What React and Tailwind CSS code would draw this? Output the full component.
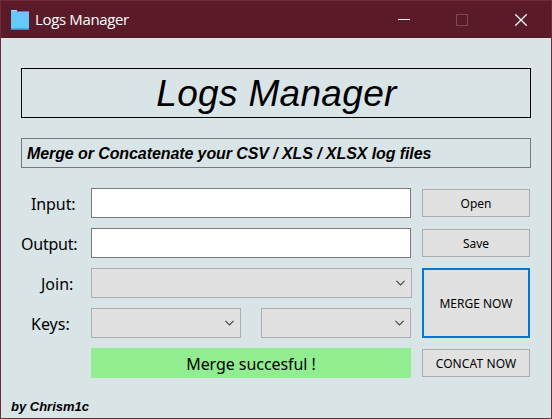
function Chevron() {
  return (
    <svg className="h-[6px] w-[9px] shrink-0" viewBox="0 0 9 6" fill="none">
      <path d="M0.4 0.8 L4.5 4.9 L8.6 0.8" stroke="#444" strokeWidth="1.1" />
    </svg>
  );
}

function Select({ className }) {
  return (
    <div className={`flex h-[30px] items-center justify-end border border-[#adadad] bg-[#e1e1e1] pr-[6px] ${className}`}>
      <Chevron />
    </div>
  );
}

function Label({ children, className }) {
  return <div className={`h-[30px] w-[70px] whitespace-nowrap text-base leading-[32px] ${className}`}>{children}</div>;
}

function Button({ children, className }) {
  return (
    <button className={`flex w-[108px] items-center justify-center whitespace-nowrap bg-[#e1e1e1] pt-[2px] text-xs ${className}`}>
      {children}
    </button>
  );
}

function TitleBar() {
  return (
    <header className="flex h-[37px] items-center bg-[#5a1a27] text-white">
      <svg className="ml-[10px] h-[20px] w-[18px]" viewBox="0 0 18 20">
        <path d="M0 0H6V1H18V20H0Z" fill="#398dbb" />
        <path d="M0 0H6V2H18V18.5H0Z" fill="#69c8fa" />
        <path d="M0 0H6V1H0Z" fill="#a9e1fc" />
      </svg>
      <span className="ml-[6px] pb-[2px] text-[15px] leading-5 tracking-[-0.35px] font-['Open_Sans',sans-serif]">Logs Manager</span>
      <div className="ml-auto mr-[24px] flex items-center">
        <svg className="h-3 w-3" viewBox="0 0 12 12"><path d="M0 5.5H12" stroke="#fff" /></svg>
        <svg className="ml-[46px] h-3 w-3" viewBox="0 0 12 12"><path d="M.5 .5H11.5V11.5H.5Z" fill="none" stroke="#804b55" /></svg>
        <svg className="ml-[47px] h-3 w-3" viewBox="0 0 12 12"><path d="M.3 .3L11.7 11.7M11.7 .3L.3 11.7" stroke="#fff" strokeWidth="1.25" /></svg>
      </div>
    </header>
  );
}

export default function App() {
  return (
    <div className="flex h-[419px] w-[552px] flex-col overflow-hidden border border-[#6e2b39] bg-[#d9e4e6] text-black font-['Noto_Sans',sans-serif]">
      <TitleBar />
      <main className="flex flex-col pl-5 pt-[30px]">
        <h1 className="h-[50px] w-[510px] border border-black pl-px text-center text-[37px] italic leading-[50px] tracking-[0.32px] font-['Liberation_Sans',sans-serif]">Logs Manager</h1>
        <h2 className="mt-5 h-[30px] w-[510px] border border-[#78787c] pl-[5px] text-base font-bold italic leading-[29px] tracking-[-0.09px] font-['Liberation_Sans',sans-serif]">Merge or Concatenate your CSV / XLS / XLSX log files</h2>
        <div className="mt-5 flex">
          <div className="flex flex-col gap-[10px]">
            <Label className="pl-[10px] tracking-[-0.1px]">Input:</Label>
            <Label className="tracking-[-0.25px]">Output:</Label>
            <Label className="pl-5">Join:</Label>
            <Label className="pl-[10px]">Keys:</Label>
          </div>
          <div className="flex w-[331px] flex-col gap-[10px]">
            <input className="h-[30px] w-[320px] border border-[#7a7a7a] bg-white" />
            <input className="h-[30px] w-[320px] border border-[#7a7a7a] bg-white" />
            <Select className="w-[321px]" />
            <div className="flex gap-5">
              <Select className="w-[150px]" />
              <Select className="w-[150px]" />
            </div>
            <div className="h-[30px] w-[320px] bg-[#90ee90] text-center text-base leading-[32px] tracking-[-0.06px]">Merge succesful !</div>
          </div>
          <div className="flex flex-col pt-px">
            <Button className="h-[28px] border border-[#adadad]">Open</Button>
            <Button className="mt-3 h-[28px] border border-[#adadad]">Save</Button>
            <Button className="mt-[11px] h-[70px] border-2 border-[#0078d7]">MERGE NOW</Button>
            <Button className="mt-[11px] h-[28px] border border-[#adadad] tracking-[0.1px]">CONCAT NOW</Button>
          </div>
        </div>
      </main>
      <footer className="ml-[10px] mt-[21px] text-[13px] font-bold italic leading-4 font-['Liberation_Sans',sans-serif]">by Chrism1c</footer>
    </div>
  );
}
